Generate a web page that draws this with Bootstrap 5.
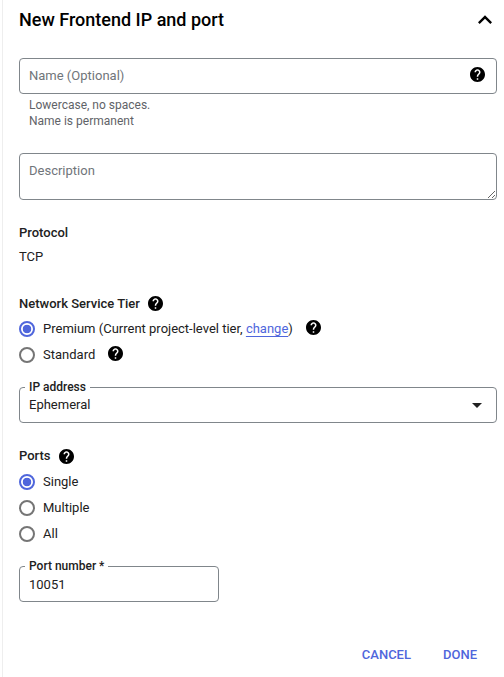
<!doctype html>
<html lang="en">
<head>
<meta charset="utf-8">
<title>New Frontend IP and port</title>
<link href="https://cdn.jsdelivr.net/npm/bootstrap@5.3.0/dist/css/bootstrap.min.css" rel="stylesheet">
<style>
html, body { height: 100%; }
body { font-family: Roboto, "Liberation Sans", sans-serif; font-size: 13px; line-height: 20px; color: #212121; background: #fff; overflow: hidden; }
.panel { margin-left: 2px; border-left: 1px solid #eeeeee; height: 677px; padding: 0 7px 0 16px; display: flex; flex-direction: column; }
.head-row { height: 40px; }
.panel-title { font-size: 18px; font-weight: 500; line-height: 40px; margin: 0; color: #000; }
.chev { width: 28px; height: 28px; margin-right: -2px; }
.field-box { margin-top: 18px; position: relative; }
.form-control.gfield, .form-select.gfield { height: 36px; border: 1px solid #80868b; border-radius: 4px; padding: 0 40px 1px 9px; font-size: 13px; line-height: 20px; color: #212121; box-shadow: none; }
.form-control.gfield::placeholder { color: #70757a; opacity: 1; }
.form-control.gtext { height: 47px; padding-top: 7px; padding-bottom: 0; display: block; }
.form-select.gfield { background-image: url("data:image/svg+xml,%3Csvg xmlns='http://www.w3.org/2000/svg' viewBox='0 0 10 5'%3E%3Cpath d='M0 0l5 5 5-5z' fill='%23212121'/%3E%3C/svg%3E"); background-size: 10px 5px; background-position: right 14px center; padding-top: 0; padding-bottom: 0; }
.help-ico { width: 15px; height: 15px; display: block; flex: none; fill: #000; }
.over-ico { position: absolute; right: 12px; top: 9px; }
.hint { font-size: 12px; line-height: 16px; color: #5f6368; padding-left: 10px; margin-top: 3px; }
.gap-desc { margin-top: 24px; }
.sec-label { font-weight: 500; line-height: 20px; color: #212121; margin: 0; font-size: 13px; }
.proto-label { margin-top: 23px; }
.proto-val { margin-top: 4px; }
.tier-label { margin-top: 27px; }
.tier-label .help-ico { margin-bottom: 1px; }
.radio-stack { margin-top: 2px; }
.radio-stack.ports-stack { margin-top: 3px; }
.radio-row { height: 26px; margin: 0; padding: 0; min-height: 0; display: flex; align-items: center; }
.radio-row .form-check-input { float: none; margin: 0 8px 0 0; width: 16px; height: 16px; border: 2px solid #757575; background-color: #fff; flex: none; }
.radio-row .form-check-input:checked { border-color: #4f66dc; background-color: #fff; background-image: radial-gradient(circle, #4f66dc 0 4px, #fff 4.6px); }
.radio-row .form-check-label { color: #212121; }
.radio-row .help-ico { margin-left: 13px; margin-bottom: 3px; }
.chg { color: #4f66dc; text-decoration: underline; text-underline-offset: 3px; }
.notch { position: absolute; left: 6px; top: -8px; padding: 0 4px; background: #fff; font-size: 12px; line-height: 16px; font-weight: 500; color: #212121; }
.ip-box { margin-top: 19px; }
.port-label { margin-top: 23px; }
.port-box { margin-top: 19px; width: 200px; }
.port-box .form-control.gfield { padding-right: 9px; padding-top: 1px; padding-bottom: 0; }
.act-row { margin-top: auto; padding-bottom: 10px; padding-right: 12px; gap: 16px; }
.act-row .btn { font-size: 13px; font-weight: 500; line-height: 24px; color: #4f66dc; padding: 0 8px 0 8px; border: 0; text-decoration: none; }
</style>
</head>
<body>
<svg width="0" height="0" class="position-absolute">
  <symbol id="q" viewBox="2 2 20 20"><path d="M12 2C6.48 2 2 6.48 2 12s4.48 10 10 10 10-4.48 10-10S17.52 2 12 2zm1 17h-2v-2h2v2zm2.07-7.75l-.9.92C13.45 12.9 13 13.5 13 15h-2v-.5c0-1.1.45-2.1 1.17-2.83l1.24-1.26c.37-.36.59-.86.59-1.41 0-1.1-.9-2-2-2s-2 .9-2 2H8c0-2.21 1.79-4 4-4s4 1.79 4 4c0 .88-.36 1.68-.93 2.25z"/></symbol>
</svg>
<main class="panel">
  <div class="head-row d-flex align-items-center justify-content-between">
    <h1 class="panel-title">New Frontend IP and port</h1>
    <svg class="chev" viewBox="0 0 24 24"><path d="M7.41 15.41L12 10.83l4.59 4.58L18 14l-6-6-6 6z" fill="#000"/></svg>
  </div>
  <div class="field-box">
    <input class="form-control gfield" type="text" placeholder="Name (Optional)" aria-label="Name">
    <svg class="help-ico over-ico"><use href="#q"/></svg>
  </div>
  <div class="hint">Lowercase, no spaces.<br>Name is permanent</div>
  <div class="gap-desc">
    <textarea class="form-control gfield gtext" placeholder="Description" aria-label="Description"></textarea>
  </div>
  <p class="sec-label proto-label">Protocol</p>
  <div class="proto-val">TCP</div>
  <div class="d-flex align-items-center gap-2 tier-label">
    <p class="sec-label">Network Service Tier</p>
    <svg class="help-ico"><use href="#q"/></svg>
  </div>
  <div class="radio-stack">
    <div class="form-check radio-row">
      <input class="form-check-input" type="radio" name="tier" id="t1" checked>
      <label class="form-check-label" for="t1">Premium (Current project-level tier, <a href="#" class="chg">change</a>)</label>
      <svg class="help-ico"><use href="#q"/></svg>
    </div>
    <div class="form-check radio-row">
      <input class="form-check-input" type="radio" name="tier" id="t2">
      <label class="form-check-label" for="t2">Standard</label>
      <svg class="help-ico"><use href="#q"/></svg>
    </div>
  </div>
  <div class="field-box ip-box">
    <span class="notch">IP address</span>
    <select class="form-select gfield" aria-label="IP address"><option>Ephemeral</option></select>
  </div>
  <div class="d-flex align-items-center gap-2 port-label">
    <p class="sec-label">Ports</p>
    <svg class="help-ico"><use href="#q"/></svg>
  </div>
  <div class="radio-stack ports-stack">
    <div class="form-check radio-row">
      <input class="form-check-input" type="radio" name="ports" id="p1" checked>
      <label class="form-check-label" for="p1">Single</label>
    </div>
    <div class="form-check radio-row">
      <input class="form-check-input" type="radio" name="ports" id="p2">
      <label class="form-check-label" for="p2">Multiple</label>
    </div>
    <div class="form-check radio-row">
      <input class="form-check-input" type="radio" name="ports" id="p3">
      <label class="form-check-label" for="p3">All</label>
    </div>
  </div>
  <div class="field-box port-box">
    <span class="notch">Port number *</span>
    <input class="form-control gfield" type="text" value="10051" aria-label="Port number">
  </div>
  <div class="d-flex justify-content-end act-row">
    <button type="button" class="btn btn-link">CANCEL</button>
    <button type="button" class="btn btn-link">DONE</button>
  </div>
</main>
<script src="https://cdn.jsdelivr.net/npm/bootstrap@5.3.0/dist/js/bootstrap.bundle.min.js"></script>
</body>
</html>
